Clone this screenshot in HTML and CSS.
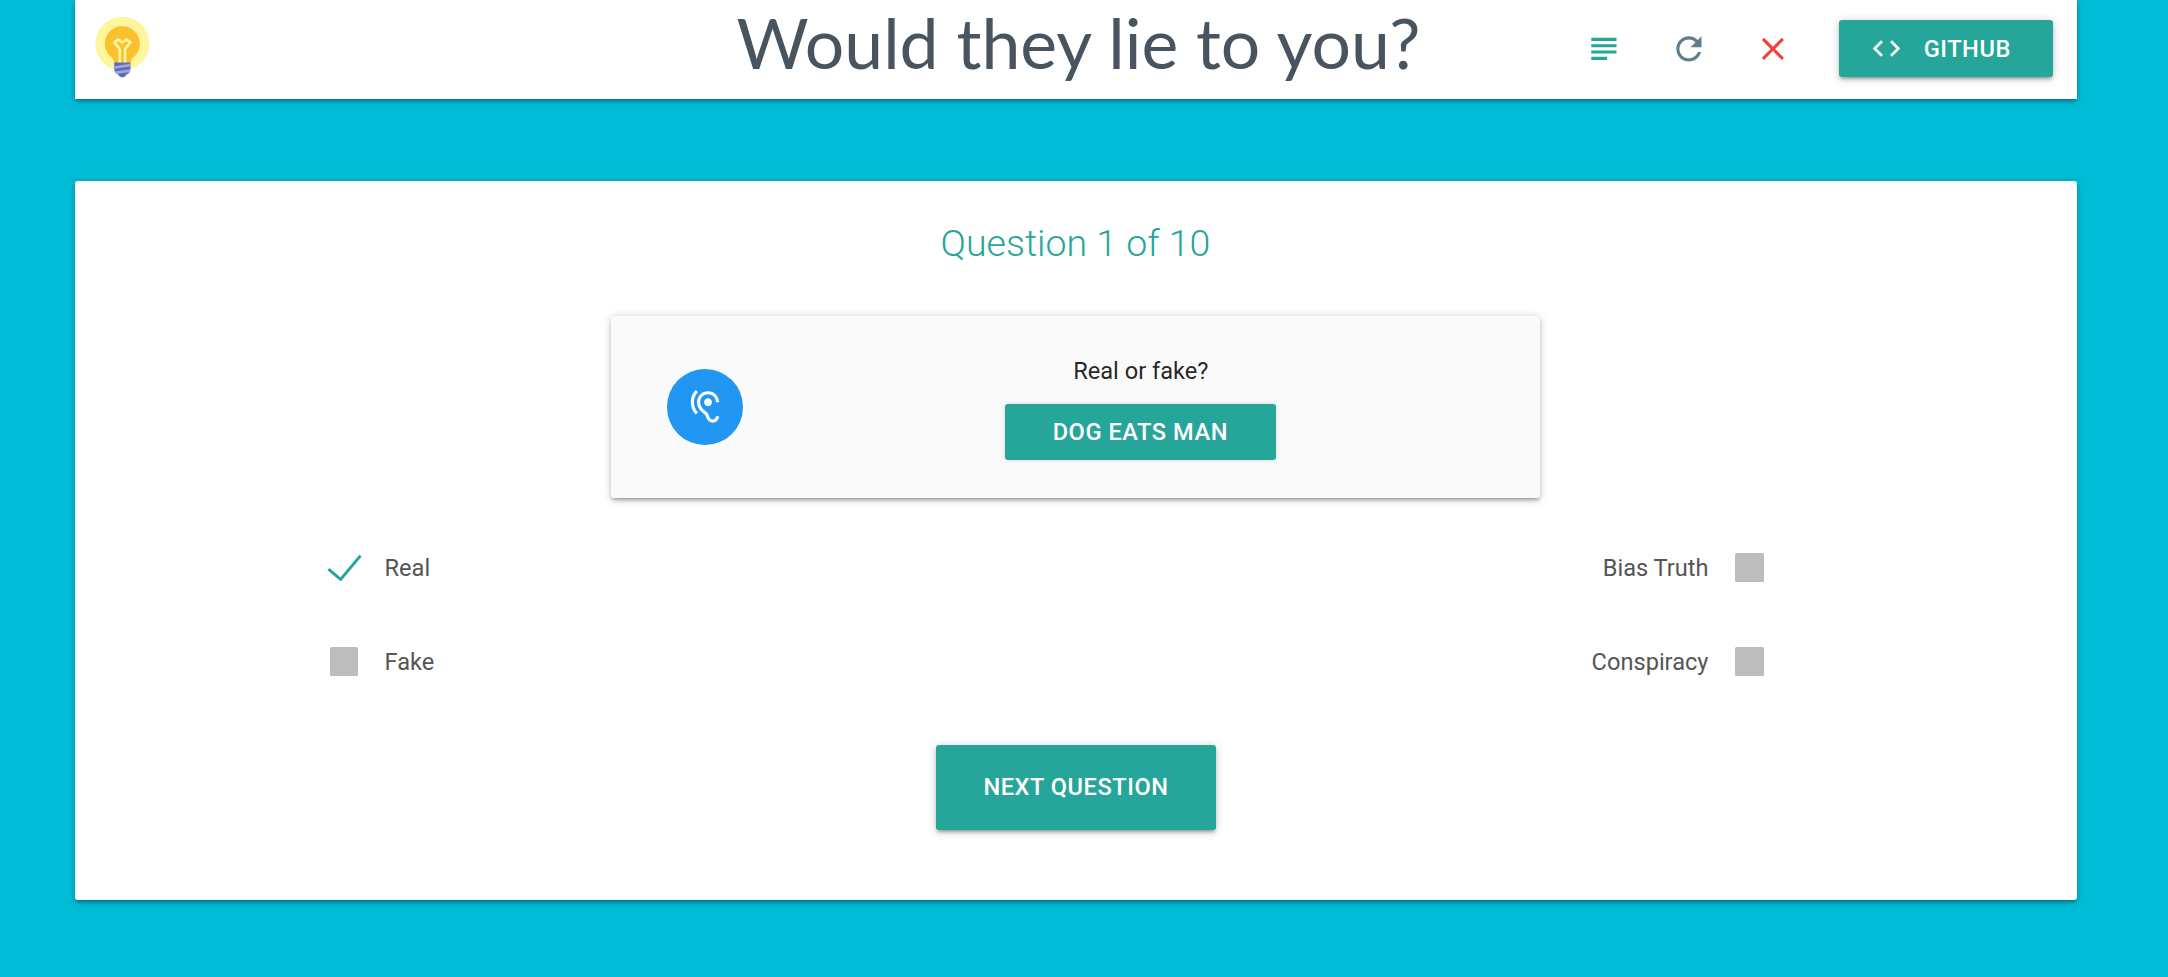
FILE: index.html
```html
<!DOCTYPE html>
<html lang="en">
<head>
<meta charset="utf-8">
<title>Would they lie to you?</title>
<link rel="stylesheet" href="styles.css">
</head>
<body>
<header class="topbar raised">
  <svg class="logo" viewBox="0 0 48 48">
    <circle fill="#fff59d" cx="24" cy="22" r="20"/>
    <path fill="#fbc02d" d="M37 22c0-7.7-6.6-13.8-14.5-12.9-6 .7-10.8 5.5-11.4 11.5-.5 4.6 1.4 8.7 4.6 11.3 1.4 1.2 2.3 2.9 2.3 4.8v.3h12v-.1c0-1.8.8-3.6 2.2-4.8C35.1 29.7 37 26.1 37 22z"/>
    <path fill="#fff59d" d="M30.6 20.2l-3-2c-.3-.2-.8-.2-1.1 0L24 19.8l-2.4-1.6c-.3-.2-.8-.2-1.1 0l-3 2c-.2.2-.4.4-.4.7s0 .6.2.8l3.8 4.7V37h2V26c0-.2-.1-.4-.2-.6l-3.3-4.1 1.5-1 2.4 1.6c.3.2.8.2 1.1 0l2.4-1.6 1.5 1-3.3 4.1c-.1.2-.2.4-.2.6v11h2V26.4l3.8-4.7c.2-.2.3-.5.2-.8s-.2-.6-.4-.7z"/>
    <circle fill="#5c6bc0" cx="24" cy="44" r="3"/>
    <path fill="#5c6bc0" d="M26 45h-4c-2.2 0-4-1.8-4-4v-5h12v5c0 2.2-1.8 4-4 4z"/>
    <path fill="#9fa8da" d="M30 41l-11.6 1.6c.3.7.9 1.4 1.6 1.8l9.4-1.3c.4-.6.6-1.3.6-2.1zM18 38.7v2L30 39v-2z"/>
  </svg>
  <h1 class="title">Would they lie to you?</h1>
  <nav class="actions">
    <svg class="icon icon-teal" viewBox="0 0 24 24"><path d="M14 17H4v2h10v-2zm6-8H4v2h16V9zM4 15h16v-2H4v2zM4 5v2h16V5H4z"/></svg>
    <svg class="icon icon-slate" viewBox="0 0 24 24"><path d="M17.65 6.35C16.2 4.9 14.21 4 12 4c-4.42 0-7.99 3.58-7.99 8s3.57 8 7.99 8c3.73 0 6.84-2.55 7.73-6h-2.08c-.82 2.33-3.04 4-5.65 4-3.31 0-6-2.69-6-6s2.69-6 6-6c1.66 0 3.14.69 4.22 1.78L13 11h7V4l-2.35 2.35z"/></svg>
    <svg class="icon icon-red" viewBox="0 0 24 24"><path d="M19 6.41L17.59 5 12 10.59 6.41 5 5 6.41 10.59 12 5 17.59 6.41 19 12 13.41 17.59 19 19 17.59 13.41 12z"/></svg>
    <a class="btn btn-github raised">
      <svg class="code" viewBox="0 0 24 24"><path d="M9.4 16.6L4.8 12l4.6-4.6L8 6l-6 6 6 6 1.4-1.4zm5.2 0l4.6-4.6-4.6-4.6L16 6l6 6-6 6-1.4-1.4z"/></svg>
      <span>GITHUB</span>
    </a>
  </nav>
</header>
<main class="quiz raised">
  <h2 class="progress">Question 1 of 10</h2>
  <section class="prompt raised">
    <div class="badge">
      <svg class="icon" viewBox="0 0 24 24"><path d="M17 20c-.29 0-.56-.06-.76-.15-.71-.37-1.21-.88-1.71-2.38-.51-1.56-1.47-2.29-2.39-3-.79-.61-1.61-1.24-2.32-2.53C9.29 10.98 9 9.93 9 9c0-2.8 2.2-5 5-5s5 2.2 5 5h2c0-3.93-3.07-7-7-7S7 5.07 7 9c0 1.26.38 2.65 1.07 3.9.91 1.65 1.98 2.48 2.85 3.15.81.62 1.39 1.07 1.71 2.05.6 1.82 1.37 2.84 2.73 3.55.51.23 1.07.35 1.64.35 2.21 0 4-1.79 4-4h-2c0 1.1-.9 2-2 2zM7.64 2.64L6.22 1.22C4.23 3.21 3 5.96 3 9s1.23 5.79 3.22 7.78l1.41-1.41C6.01 13.74 5 11.49 5 9s1.01-4.74 2.64-6.36zM11.5 9c0 1.38 1.12 2.5 2.5 2.5s2.5-1.12 2.5-2.5-1.12-2.5-2.5-2.5-2.5 1.12-2.5 2.5z"/></svg>
    </div>
    <div class="claim">
      <p class="ask">Real or fake?</p>
      <div class="btn btn-claim">DOG EATS MAN</div>
    </div>
  </section>
  <div class="options">
    <div class="column">
      <label class="option"><svg class="tick" viewBox="0 0 36 28"><path d="M1.5 15.500l12.500 10.500L34.500 1.500"/></svg><span>Real</span></label>
      <label class="option"><span class="box"></span><span>Fake</span></label>
    </div>
    <div class="column column-right">
      <label class="option"><span>Bias Truth</span><span class="box"></span></label>
      <label class="option"><span>Conspiracy</span><span class="box"></span></label>
    </div>
  </div>
  <div class="btn btn-next raised">NEXT QUESTION</div>
</main>
</body>
</html>
```
FILE: styles.css
```css
* { box-sizing: border-box; }
body {
  margin: 0;
  padding: 0 91.5px 0 74.5px;
  height: 977px;
  overflow: hidden;
  background: #00bcd6;
  font-family: Roboto, sans-serif;
  font-size: 23.6px;
  color: rgba(0, 0, 0, .87);
}
h1, h2, p { margin: 0; font-weight: 400; }
.raised {
  box-shadow: 0 3px 3px rgba(0, 0, 0, .14), 0 4.7px 1.6px -3px rgba(0, 0, 0, .12), 0 1.6px 8px rgba(0, 0, 0, .2);
}
.topbar {
  display: grid;
  grid-template-columns: 1fr auto 1fr;
  height: 98.7px;
  padding: 0 23.6px 0 15.5px;
  background: #fff;
}
.logo { width: 64.7px; height: 64.7px; margin-top: 14px; }
.title {
  padding-left: 14px;
  font-family: Lato, sans-serif;
  font-size: 69.7px;
  line-height: 84px;
  color: #485460;
  white-space: nowrap;
}
.actions {
  display: flex;
  justify-content: flex-end;
  align-items: center;
  height: 97px;
}
.icon { flex: none; width: 37.8px; height: 37.8px; fill: currentColor; }
.actions .icon { margin-right: 46.7px; }
.icon-teal { color: #26a69a; }
.icon-slate { color: #607d8b; }
.icon-red { color: #f44336; }
.btn {
  display: flex;
  align-items: center;
  justify-content: center;
  height: 56.7px;
  border-radius: 3px;
  background: #26a69a;
  color: #fff;
  font-weight: 500;
  letter-spacing: .55px;
  white-space: nowrap;
}
.btn-github { flex: none; width: 214.3px; padding-right: 11px; gap: 21px; }
.code { width: 33px; height: 33px; fill: currentColor; }
.quiz {
  display: flex;
  flex-direction: column;
  align-items: center;
  height: 719px;
  margin-top: 82.7px;
  padding-top: 38px;
  border-radius: 3px;
  background: #fff;
}
.progress { font-size: 37.5px; line-height: 48px; font-weight: 300; color: #26a69a; }
.prompt {
  display: flex;
  width: 929.8px;
  height: 181.5px;
  margin-top: 48.7px;
  padding: 0 56.6px;
  border-radius: 3px;
  background: #fafafa;
}
.badge {
  display: grid;
  place-items: center;
  width: 75.6px;
  height: 75.6px;
  margin-top: 53px;
  border-radius: 50%;
  background: #2196f3;
  color: #fff;
}
.claim { width: 270.5px; margin: 37px 0 0 262.3px; }
.ask { line-height: 36px; text-align: center; padding-left: 1px; }
.btn-claim { margin-top: 14.6px; box-shadow: 0 0 4px rgba(0, 0, 0, .15); }
.options {
  display: flex;
  justify-content: space-between;
  width: 1438px;
  margin: 50px 0 0 -60px;
  color: #555;
}
.column { display: grid; gap: 54px; }
.column-right { justify-items: end; }
.option { display: flex; align-items: center; gap: 26.5px; height: 40px; line-height: 40px; }
.box { flex: none; width: 28.5px; height: 28.5px; margin-left: 3px; border-radius: 1.5px; background: #bdbdbd; }
.column-right .box { margin: 0 1px 0 0; }
.tick { flex: none; width: 35px; height: 27.5px; margin-right: -3.500px; fill: none; stroke: #26a69a; stroke-width: 3; }
.btn-next { width: 280px; height: 84.7px; margin: 63.5px 0 0 1px; }
```
